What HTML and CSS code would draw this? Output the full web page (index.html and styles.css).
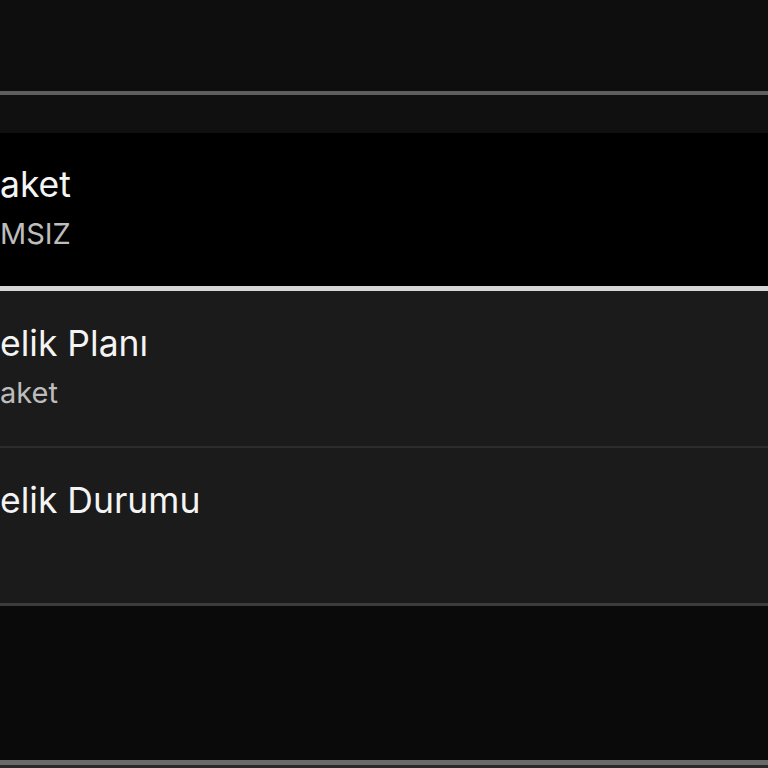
FILE: index.html
```html
<!DOCTYPE html>
<html lang="tr">
<head>
    <meta charset="UTF-8">
    <meta name="viewport" content="width=device-width, initial-scale=1.0">
    <title>Üyelik</title>
    <link rel="stylesheet" href="styles.css">
</head>
<body>
    <!-- barre du haut -->
    <div class="topbar"></div>
    <div class="gap"></div>

    <!-- liste des lignes d'abonnement -->
    <div class="liste">
        <div class="ligne actif">
            <div class="titre">aket</div>
            <div class="sous">MSIZ</div>
        </div>
        <div class="ligne">
            <div class="titre">elik Planı</div>
            <div class="sous">aket</div>
        </div>
        <div class="ligne dernier">
            <div class="titre">elik Durumu</div>
            <div class="sous"></div>
        </div>
    </div>

    <div class="vide"></div>
    <div class="bas"></div>
</body>
</html>
```

FILE: styles.css
```css
body {
    margin: 0;
    background-color: #0d0d0d;
    font-family: Inter, "Noto Sans", sans-serif;
    color: #f2f2f2;
    overflow: hidden;
}
.topbar {
    height: 91px;
    background-color: #0e0e0e;
    border-bottom: 4px solid #5e5e5e;
}
.gap {
    height: 38px;
    background-color: #101010;
}
/* une ligne de la liste */
.ligne {
    height: 157px;
    box-sizing: border-box;
    padding-top: 33px;
    background-color: #1b1b1b;
    border-bottom: 2px solid #2c2c2c;
}
.ligne.actif {
    height: 158px;
    padding-top: 32px;
    background-color: #000;
    border-bottom: 5px solid #d6d6d6;
}
.ligne.dernier {
    height: 158px;
    border-bottom: 3px solid #3c3c3c;
}
.titre {
    font-size: 35.5px;
    line-height: 40px;
    color: #f4f4f4;
}
.sous {
    margin-top: 11px;
    font-size: 29px;
    line-height: 36px;
    color: #bdbdbd;
    min-height: 36px;
}
.vide {
    height: 154px;
    background-color: #0a0a0a;
}
.bas {
    height: 10px;
    border-top: 5px solid #6a6a6a;
    background-color: #2a2a2a;
}
```
